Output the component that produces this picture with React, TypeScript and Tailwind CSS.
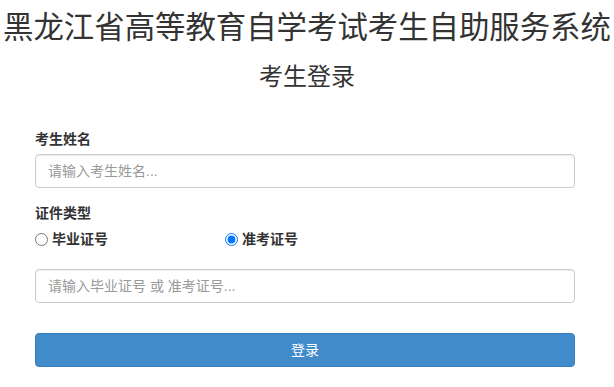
import React, { useState } from 'react';

const App: React.FC = () => {
  const [certType, setCertType] = useState<'grad' | 'exam'>('exam');

  return (
    <div className="w-[614px] h-[387px] bg-white text-[#333] overflow-hidden font-['Liberation_Sans','Noto_Sans_CJK_SC',sans-serif]">
      <h1 className="pt-[7px] text-center text-[30.4px] leading-[40px] whitespace-nowrap">
        黑龙江省高等教育自学考试考生自助服务系统
      </h1>
      <h2 className="mt-[15px] text-center text-[24px] leading-[30px]">考生登录</h2>

      <form className="mx-[35px] w-[540px] mt-[37px]" onSubmit={e => e.preventDefault()}>
        <label className="block text-[14px] font-bold leading-[20px]">考生姓名</label>
        <input
          type="text"
          placeholder="请输入考生姓名..."
          className="mt-[5px] block w-full h-[34px] px-[12px] text-[14px] border border-[#ccc] rounded-[4px] shadow-[inset_0_1px_1px_rgba(0,0,0,0.075)] placeholder:text-[#999] outline-none"
        />

        <label className="mt-[15px] block text-[14px] font-bold leading-[20px]">证件类型</label>
        <div className="mt-[6px] flex items-center h-[20px] text-[14px] font-bold">
          <label className="w-[190px] flex items-center gap-[4px]">
            <input
              type="radio"
              name="cert"
              checked={certType === 'grad'}
              onChange={() => setCertType('grad')}
              className="m-0 w-[13px] h-[13px]"
            />
            <span>毕业证号</span>
          </label>
          <label className="flex items-center gap-[4px]">
            <input
              type="radio"
              name="cert"
              checked={certType === 'exam'}
              onChange={() => setCertType('exam')}
              className="m-0 w-[13px] h-[13px]"
            />
            <span>准考证号</span>
          </label>
        </div>

        <input
          type="text"
          placeholder="请输入毕业证号 或 准考证号..."
          className="mt-[20px] block w-full h-[34px] px-[12px] text-[14px] border border-[#ccc] rounded-[4px] shadow-[inset_0_1px_1px_rgba(0,0,0,0.075)] placeholder:text-[#999] outline-none"
        />

        <button
          type="submit"
          className="mt-[30px] block w-full h-[34px] text-[14px] text-white bg-[#428bca] border border-[#357ebd] rounded-[4px]"
        >
          登录
        </button>
      </form>
    </div>
  );
};

export default App;
